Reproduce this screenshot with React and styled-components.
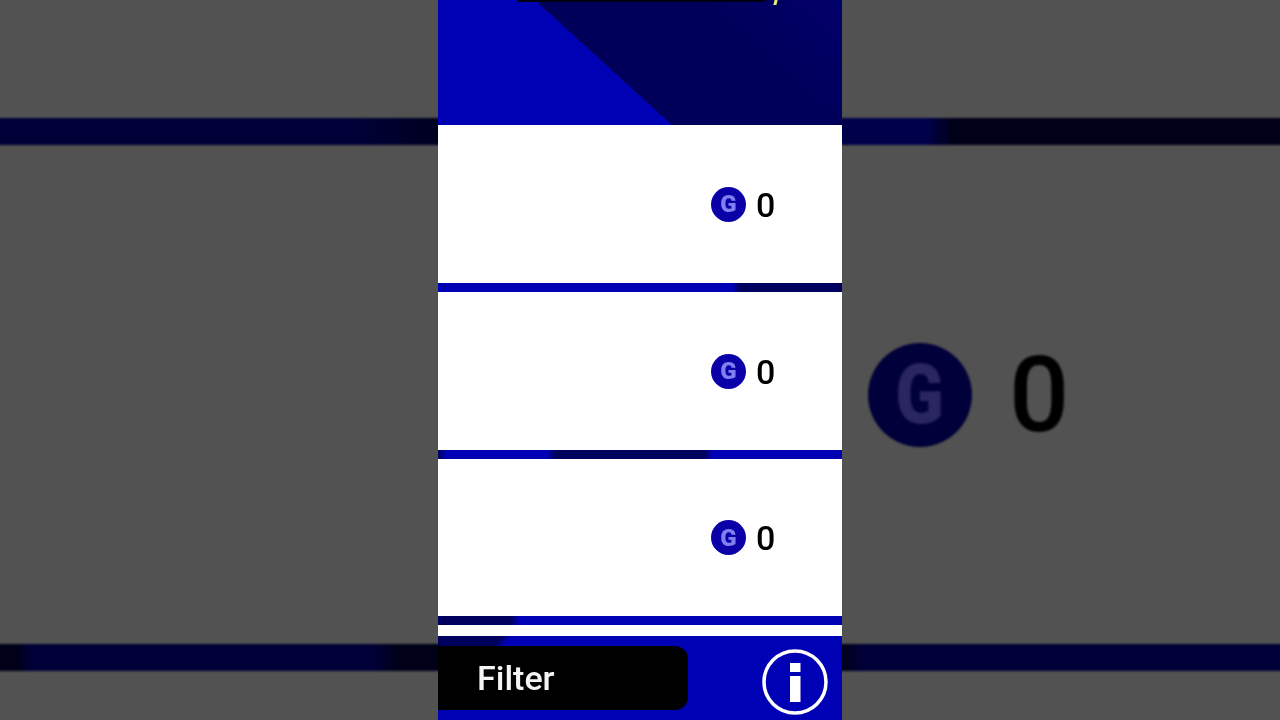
import React from "react";
import styled, { createGlobalStyle } from "styled-components";

const GlobalStyle = createGlobalStyle`
  html, body {
    margin: 0;
    padding: 0;
    background: #525252;
    overflow: hidden;
  }
`;

const Page = styled.div`
  display: grid;
  grid-template-columns: 438px 404px 438px;
  width: 1280px;
  height: 720px;
  font-family: Roboto, "Liberation Sans", sans-serif;
  overflow: hidden;
`;

const Side = styled.div`
  display: flex;
  flex-direction: column;
  justify-content: space-between;
  height: 720px;
  padding: 118px 0 49px;
  box-sizing: border-box;
  background: #525252;
  overflow: hidden;
`;

const Band = styled.div`
  height: 27px;
  margin: 0 -6px;
  background: ${(p) => p.$fill};
  filter: blur(1px);
`;

const BlurCoinRow = styled.div`
  display: flex;
  align-items: center;
  gap: 37px;
  padding-left: 26px;
  filter: blur(1.2px);
`;

const BlurCoin = styled.div`
  display: flex;
  align-items: center;
  justify-content: center;
  width: 104px;
  height: 104px;
  border-radius: 50%;
  background: #00003a;
  color: #2a2660;
  font-size: 84px;
  font-weight: 900;

  span {
    transform: scaleX(0.85);
  }
`;

const BlurZero = styled.span`
  color: #000;
  font-size: 106px;
  font-weight: 500;
  line-height: 1;
`;

const Phone = styled.div`
  display: flex;
  flex-direction: column;
  height: 720px;
  background: #fff;
  filter: blur(0.35px);
`;

const Header = styled.div`
  display: flex;
  align-items: flex-start;
  gap: 9px;
  height: 125px;
  padding-left: 80px;
  box-sizing: border-box;
  background: linear-gradient(42.4deg, #0000b4 157.7px, #00005a 157.7px, #00005a 72%, #00006a 100%);
`;

const TopStrip = styled.div`
  width: 247px;
  height: 2px;
  background: #000014;
`;

const TopDot = styled.div`
  width: 3px;
  height: 5px;
  background: #e6f27a;
  transform: skewX(-14deg);
`;

const Row = styled.div`
  display: flex;
  align-items: center;
  justify-content: flex-end;
  gap: 10px;
  height: ${(p) => p.$height}px;
  padding: 0 66px 0 0;
  box-sizing: border-box;
`;

const Coin = styled.div`
  display: flex;
  align-items: center;
  justify-content: center;
  width: 35px;
  height: 35px;
  border-radius: 50%;
  background: #0b00a8;
  color: #8080f0;
  font-size: 24px;
  font-weight: 900;
  line-height: 1;
  filter: blur(0.6px);
`;

const Amount = styled.span`
  width: 20px;
  margin-top: 1px;
  color: #000;
  font-size: 34px;
  font-weight: 500;
  line-height: 1;
`;

const Divider = styled.div`
  height: 9px;
  background: ${(p) => p.$fill};
`;

const Gap = styled.div`
  height: 11px;
`;

const Footer = styled.div`
  display: flex;
  align-items: flex-start;
  justify-content: space-between;
  flex: 1;
  padding: 10px 14px 0 0;
  background:
    linear-gradient(125deg, #00005e 52px, #0000b4 60px) no-repeat 0 0 / 100% 10px,
    #0000b4;
`;

const FilterButton = styled.div`
  display: flex;
  align-items: center;
  width: 250px;
  height: 64px;
  padding: 0 0 0 39px;
  box-sizing: border-box;
  background: #000;
  border-radius: 0 13px 13px 0;
  color: #f4f4f4;
  font-size: 34px;
  font-weight: 500;
`;

const InfoIcon = styled.svg`
  width: 66px;
  height: 66px;
  margin-top: 3px;
`;

const BLUE = "#0000b4";
const DARK = "#00005e";

const rows = [
  { height: 158, fill: `linear-gradient(90deg, ${BLUE} 73%, ${DARK} 74.5%)` },
  {
    height: 158,
    fill: `linear-gradient(90deg, ${DARK} 0, ${BLUE} 2%, ${BLUE} 27%, ${DARK} 29%, ${DARK} 66%, ${BLUE} 68%)`,
  },
  { height: 157, fill: `linear-gradient(90deg, ${DARK} 18%, ${BLUE} 20%)` },
];

const Info = () => (
  <InfoIcon viewBox="0 0 66 66" aria-hidden="true">
    <circle cx="33" cy="33" r="31" fill="none" stroke="#fff" strokeWidth="3.5" />
    <rect x="28" y="14" width="10.5" height="9" fill="#fff" />
    <rect x="28" y="27" width="10.5" height="26" fill="#fff" />
  </InfoIcon>
);

export default function App() {
  return (
    <>
      <GlobalStyle />
      <Page>
        <Side>
          <Band $fill="linear-gradient(90deg, #000038 80%, #00001e 100%)" />
          <Band $fill="linear-gradient(90deg, #000018 5%, #000038 8%, #000038 84%, #000018 90%)" />
        </Side>
        <Phone>
          <Header>
            <TopStrip />
            <TopDot />
          </Header>
          {rows.map((row, i) => (
            <React.Fragment key={i}>
              <Row $height={row.height}>
                <Coin>G</Coin>
                <Amount>0</Amount>
              </Row>
              <Divider $fill={row.fill} />
            </React.Fragment>
          ))}
          <Gap />
          <Footer>
            <FilterButton>Filter</FilterButton>
            <Info />
          </Footer>
        </Phone>
        <Side>
          <Band $fill="linear-gradient(90deg, #00004a 20%, #000018 26%)" />
          <BlurCoinRow>
            <BlurCoin>
              <span>G</span>
            </BlurCoin>
            <BlurZero>0</BlurZero>
          </BlurCoinRow>
          <Band $fill="linear-gradient(90deg, #000018 1%, #000038 6%)" />
        </Side>
      </Page>
    </>
  );
}
